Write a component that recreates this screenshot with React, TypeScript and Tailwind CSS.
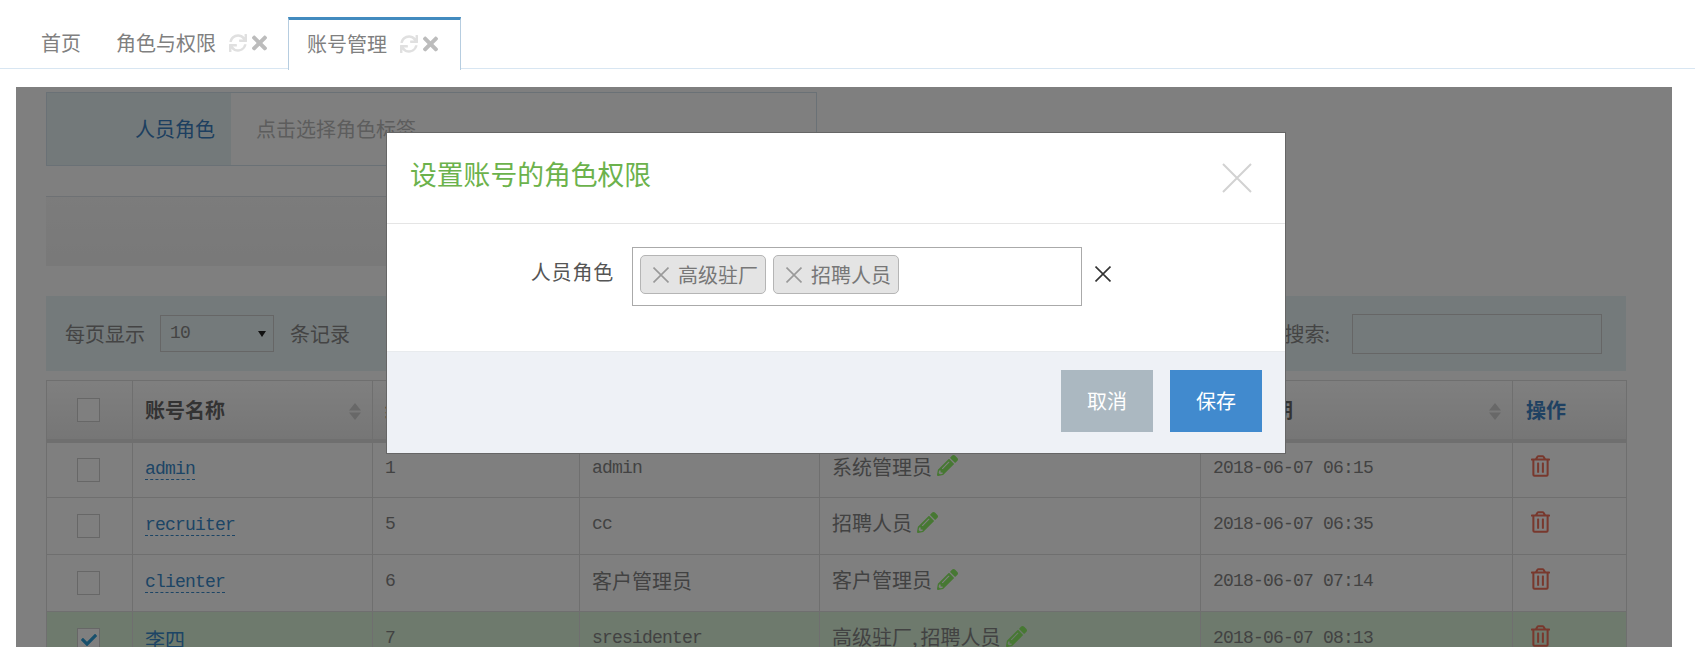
import { FaCheck, FaPencilAlt, FaRegTrashAlt, FaSync, FaTimes } from "react-icons/fa"

const cjk = "font-['Noto_Sans_CJK_SC','Liberation_Sans',sans-serif]"
const mono = "font-['Liberation_Mono','Noto_Sans_CJK_SC',monospace] text-[18px] tracking-[-0.8px]"

const rows = [
  { name: "admin", id: "1", login: "admin", role: "系统管理员", date: "2018-06-07 06:15" },
  { name: "recruiter", id: "5", login: "cc", role: "招聘人员", date: "2018-06-07 06:35" },
  { name: "clienter", id: "6", login: "客户管理员", role: "客户管理员", date: "2018-06-07 07:14" },
  { name: "李四", id: "7", login: "sresidenter", role: "高级驻厂,招聘人员", date: "2018-06-07 08:13", checked: true },
]

function isAscii(text: string) {
  return /^[\x00-\x7f]+$/.test(text)
}

function CrossIcon({ size, color, width = 1.5 }: { size: number; color: string; width?: number }) {
  return (
    <svg width={size} height={size} viewBox="0 0 30 30" fill="none" stroke={color} strokeWidth={width} className="shrink-0">
      <path d="M1 1L29 29M29 1L1 29" />
    </svg>
  )
}

function SortIcon() {
  return (
    <svg width="12" height="17" viewBox="0 0 12 17" className="absolute right-[11px] top-[22px]" fill="#d0d0d0">
      <path d="M6 0L12 7.5H0Z" />
      <path d="M6 17L12 9.5H0Z" />
    </svg>
  )
}

function Checkbox({ checked }: { checked?: boolean }) {
  return (
    <span className="mx-auto flex h-[24px] w-[23px] items-center justify-center border border-[#cfcfcf] bg-white">
      {checked && <FaCheck className="h-[16px] w-[16px] text-[#2f9fd8]" />}
    </span>
  )
}

function Tab({ label, active, className }: { label: string; active?: boolean; className: string }) {
  return (
    <div
      className={`flex items-center ${className} ${
        active ? "relative -mb-[2px] h-[53px] border-x border-t-[3px] border-x-[#b6cde0] border-t-[#428bbf] bg-white pb-[3px]" : "h-[52px] pt-[1px]"
      }`}
    >
      <span className="text-[20px] text-[#808080]">{label}</span>
      <FaSync className="ml-[13px] h-[18px] w-[18px] text-[#e0e0e0]" />
      <FaTimes className="ml-[5px] h-[22px] w-[15px] text-[#bcbcbc]" />
    </div>
  )
}

export default function App() {
  return (
    <div className={`relative h-screen w-full overflow-hidden bg-white ${cjk}`}>
      {/* Tabs */}
      <div className="flex h-[69px] items-end border-b border-[#d8e6f2] pl-[21px]">
        <div className="flex h-[52px] items-center pl-[20px] pr-[18px] pt-[1px] text-[20px] text-[#808080]">首页</div>
        <Tab label="角色与权限" className="w-[189px] pl-[17px]" />
        <Tab label="账号管理" active className="w-[173px] pl-[18px]" />
      </div>

      {/* Page content */}
      <div className="relative mt-[18px] ml-[16px] w-[1656px] pl-[30px] pr-[46px] pt-[5px]">
        <div className="flex h-[74px] w-[771px] border border-[#d5e3ec]">
          <div className="flex w-[184px] items-center justify-end bg-[#e6f2f5] pr-[16px] text-[20px] text-[#3a7fc0]">人员角色</div>
          <div className="flex items-center pl-[25px] text-[20px] text-[#bbb]">点击选择角色标签</div>
        </div>

        <div className="mt-[30px] h-[70px] w-[771px] border-t border-[#dde3e8] bg-gradient-to-b from-[#f8f8f8] to-[#f2f2f2]" />

        {/* Toolbar */}
        <div className="mt-[30px] flex h-[75px] items-center justify-between bg-[#e9f5f7] pl-[19px] pr-[24px] text-[#888]">
          <div className="flex items-center text-[20px]">
            <span>每页显示</span>
            <div className="ml-[15px] flex h-[37px] w-[114px] items-center justify-between border border-[#ccc] pl-[9px] pr-[7px]">
              <span className={`${mono} text-[#888]`}>10</span>
              <span className="mt-[1px] border-x-[4px] border-t-[6px] border-x-transparent border-t-[#222]" />
            </div>
            <span className="ml-[16px]">条记录</span>
          </div>
          <div className="flex items-center text-[20px]">
            <span>搜索:</span>
            <div className="ml-[22px] h-[40px] w-[250px] border border-[#ccc]" />
          </div>
        </div>

        {/* Table */}
        <table className="mt-[9px] w-[1580px] table-fixed border-collapse text-[20px] text-[#858585]">
          <colgroup>
            <col className="w-[86px]" />
            <col className="w-[240px]" />
            <col className="w-[207px]" />
            <col className="w-[240px]" />
            <col className="w-[381px]" />
            <col className="w-[312px]" />
            <col className="w-[114px]" />
          </colgroup>
          <thead>
            <tr className="h-[60px] bg-gradient-to-b from-[#ffffff] to-[#ececec] font-bold text-[#666]">
              <th className="border border-b-[4px] border-[#dedede] pr-[2px]">
                <Checkbox />
              </th>
              {["账号名称", "编号", "登录名", "角色", "创建日期"].map((title) => (
                <th key={title} className="relative border border-b-[4px] border-[#dedede] pl-[12px] text-left">
                  {title}
                  <SortIcon />
                </th>
              ))}
              <th className="border border-b-[4px] border-[#dedede] pl-[13px] text-left text-[#3f82c4]">操作</th>
            </tr>
          </thead>
          <tbody>
            {rows.map((row) => (
              <tr key={row.id} className={`h-[57px] ${row.checked ? "bg-[#dcf4da]" : ""}`}>
                <td className="border border-[#dedede] pr-[2px]">
                  <Checkbox checked={row.checked} />
                </td>
                <td className="border border-[#dedede] pl-[12px]">
                  <span
                    className={`block w-fit border-b border-dashed border-[#3a8acb] leading-[19px] text-[#3a8acb] ${isAscii(row.name) ? mono : ""}`}
                  >
                    {row.name}
                  </span>
                </td>
                <td className={`border border-[#dedede] pl-[12px] pb-[3px] ${mono}`}>{row.id}</td>
                <td className={`border border-[#dedede] pl-[12px] ${isAscii(row.login) ? `pb-[3px] ${mono}` : "pb-[4px]"}`}>{row.login}</td>
                <td className="border border-[#dedede] pl-[12px] pb-[6px]">
                  <div className="flex items-center gap-[5px]">
                    <span>
                      {row.role.split(",").map((part, i) => (
                        <span key={part}>
                          {i > 0 && <span className="mr-[3px]">,</span>}
                          {part}
                        </span>
                      ))}
                    </span>
                    <FaPencilAlt className="mb-[2px] h-[21px] w-[21px] text-[#8ef066]" />
                  </div>
                </td>
                <td className={`border border-[#dedede] pl-[12px] pb-[3px] ${mono}`}>{row.date}</td>
                <td className="border border-[#dedede] pl-[18px]">
                  <FaRegTrashAlt className="mb-[8px] h-[22px] w-[19px] text-[#f0705a]" />
                </td>
              </tr>
            ))}
          </tbody>
        </table>

        {/* Backdrop */}
        <div className="absolute inset-0 bg-black/50" />
      </div>

      {/* Modal */}
      <div className="absolute left-[386px] top-[132px] w-[900px] border border-[#666] bg-white">
        <div className="flex h-[91px] items-center justify-between border-b border-[#e5e5e5] pl-[23px] pr-[33px]">
          <h2 className="mb-[8px] text-[26.8px] leading-none font-normal text-[#6cb24c]">设置账号的角色权限</h2>
          <CrossIcon size={30} color="#d2d2d2" width={2} />
        </div>
        <div className="flex h-[128px] items-start border-b border-[#e8ebee] pt-[23px]">
          <div className="mt-[10px] w-[227px] text-right text-[20px] tracking-[0.8px] text-[#555]">人员角色</div>
          <div className="ml-[18px] flex h-[59px] w-[450px] items-start gap-[7px] border border-[#aaa] pl-[7px] pt-[7px]">
            {["高级驻厂", "招聘人员"].map((tag) => (
              <div
                key={tag}
                className="flex h-[39px] w-[126px] items-center gap-[9px] rounded-[5px] border border-[#b5b5b5] bg-[#e4e4e4] pl-[12px] text-[20px] text-[#777]"
              >
                <CrossIcon size={16} color="#999" width={3} />
                <span>{tag}</span>
              </div>
            ))}
          </div>
          <div className="ml-[13px] mt-[19px]">
            <CrossIcon size={16} color="#333" width={3} />
          </div>
        </div>
        <div className="flex h-[101px] items-start justify-end gap-[17px] bg-[#eef1f6] pr-[23px] pt-[18px] text-[20px] text-white">
          <button className="h-[62px] w-[92px] bg-[#abb8c1]">取消</button>
          <button className="h-[62px] w-[92px] bg-[#418ace]">保存</button>
        </div>
      </div>
    </div>
  )
}
